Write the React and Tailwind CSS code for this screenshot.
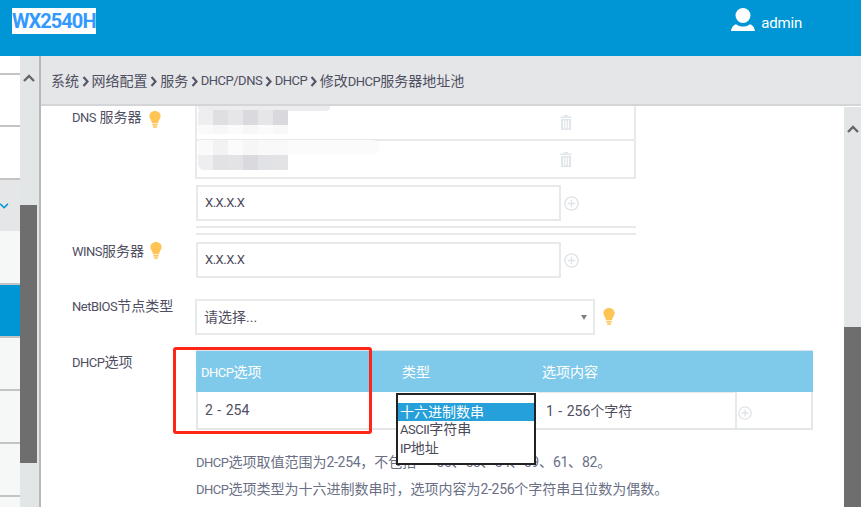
import React from "react";

const FONT = "[font-family:'Roboto','Noto_Sans_CJK_SC',sans-serif]";

function L({ children }) {
  return <span className="text-[13px] tracking-[-0.5px]">{children}</span>;
}

function N({ children }) {
  return <span className="tracking-[-0.3px]">{children}</span>;
}

function Bulb({ className }) {
  return (
    <svg viewBox="0 0 12 17" className={className} fill="#ffc454">
      <path d="M6 0C2.7 0 .4 2.4.4 5.3c0 2.6 2.2 4 2.7 6.9h5.800c.5-2.9 2.700-4.300 2.700-6.900C11.600 2.400 9.300 0 6 0z" />
      <rect x="3.400" y="13" width="5.200" height="1.600" />
      <rect x="4.200" y="15.200" width="3.600" height="1.600" />
    </svg>
  );
}

function Plus({ className }) {
  return (
    <svg viewBox="0 0 14 14" className={className} fill="none" stroke="#dfe3ea" strokeWidth="1.300">
      <circle cx="7" cy="7" r="6.200" />
      <path d="M7 3.500v7M3.500 7h7" />
    </svg>
  );
}

function Trash() {
  return (
    <svg viewBox="0 0 12 15" className="w-3 h-[15px]" fill="#e0e5ea">
      <rect x="4" y="0" width="4" height="1.500" />
      <rect x="0.500" y="1.500" width="11" height="1.500" />
      <path d="M1 4h10v11H1zM3 5.500v8h1.200v-8zM5.400 5.500v8h1.200v-8zM7.800 5.500v8H9v-8z" fillRule="evenodd" />
    </svg>
  );
}

function Up({ className }) {
  return (
    <svg viewBox="0 0 12 8" className={className} fill="none" stroke="#666" strokeWidth="2.400">
      <path d="M1 7l5-5 5 5" />
    </svg>
  );
}

function Sep() {
  return (
    <svg viewBox="0 0 7 11" className="w-[7px] h-[11px] mx-[2.800px] shrink-0" fill="none" stroke="#55566a" strokeWidth="2.200">
      <path d="M1.500 1l4 4.500-4 4.500" />
    </svg>
  );
}

function Input({ text, className = "" }) {
  return (
    <div className={"h-9 flex items-center border-2 border-[#e8e9e9] pl-[7px] text-sm text-[#4a4a5a] " + className}>
      <L>{text}</L>
    </div>
  );
}

function Mosaic({ cells, className }) {
  return (
    <div className={"absolute grid grid-cols-6 w-[90px] " + className}>
      {cells.map((c, i) => (
        <div key={i} className={c} />
      ))}
    </div>
  );
}

const TOP = [
  "h-[15px] bg-[#eeeef0] rounded-tl-sm", "h-[15px] bg-[#dfdfe2]", "h-[15px] bg-[#e6e6e8]", "h-[15px] bg-[#dadade]", "h-[15px] bg-[#e6e6e8]", "h-[15px] bg-[#d9d9dd]",
  "h-[9px] bg-[#fafafa]", "h-[9px] bg-[#f7f7f7]", "h-[9px] bg-[#fbfbfb]", "h-[9px] bg-[#f7f7f7]", "h-[9px] bg-[#fbfbfb]", "h-[9px] bg-[#f8f8f8]",
];
const BOTTOM = [
  "h-[15px] bg-[#fafafa]", "h-[15px] bg-[#f2f2f2]", "h-[15px] bg-[#fbfbfb]", "h-[15px] bg-[#f6f6f6]", "h-[15px] bg-[#f9f9f9]", "h-[15px] bg-[#f9f9f9]",
  "h-[15px] bg-[#eeeef0] rounded-bl-md", "h-[15px] bg-[#e2e2e5]", "h-[15px] bg-[#e3e3e6]", "h-[15px] bg-[#d9d9de]", "h-[15px] bg-[#e1e2e6]", "h-[15px] bg-[#e3e3e6]",
];

export default function App() {
  return (
    <div className={"w-[862px] h-[507px] overflow-hidden bg-white flex flex-col " + FONT}>
      <header className="h-14 shrink-0 mr-px bg-[#0096d6] flex justify-between">
        <div className="ml-3 mt-2 h-[26px] bg-white text-[#3399ff] text-[20px] tracking-[-0.95px] leading-[26px] font-bold">
          WX2540H
        </div>
        <div className="flex items-start h-[30px] mt-2 mr-[59px] text-white text-[15px]">
          <svg viewBox="0 0 24 23" className="w-6 h-[23px] mr-[6px]" fill="#fff">
            <circle cx="12" cy="7.500" r="7.500" />
            <path d="M0 23c.5-3 1.500-5.500 5-6.800 2 1.600 4.300 2.300 7 2.300s5-.7 7-2.300c3.500 1.300 4.500 3.800 5 6.800z" />
          </svg>
          <span className="mt-[4px] tracking-[-0.2px]">admin</span>
        </div>
      </header>

      <div className="flex flex-1 min-h-0">
        <aside className="w-[41px] shrink-0 flex">
          <div className="w-5 flex flex-col">
            <div className="h-[19px] bg-white border-b-2 border-[#c4c4c4]" />
            <div className="h-[52px] bg-white border-b-2 border-[#c4c4c4]" />
            <div className="h-[53px] bg-white border-b-2 border-[#c4c4c4]" />
            <div className="h-[51px] bg-[#e5e6e8] flex items-center">
              <svg viewBox="0 0 10 7" className="w-[9px] h-[6px]" fill="none" stroke="#0096d6" strokeWidth="1.800">
                <path d="M0 1l4.500 4.500L9 1" />
              </svg>
            </div>
            <div className="h-[54px] bg-[#f6f8f8] border-b-2 border-[#c4c4c4]" />
            <div className="h-[51px] bg-[#0096d6]" />
            <div className="h-[53px] border-t-2 border-[#c4c4c4] bg-[#f6f8f8]" />
            <div className="h-[53px] border-t-2 border-[#c4c4c4] bg-[#f6f8f8]" />
            <div className="h-[53px] border-t-2 border-[#c4c4c4] bg-[#f6f8f8]" />
            <div className="flex-1 border-t-2 border-[#c4c4c4] bg-[#f6f8f8]" />
          </div>
          <div className="w-[19px] bg-[#e3e6e7] flex flex-col">
            <div className="w-[17px] h-[149px] flex justify-center pt-[18px]">
              <Up className="w-3 h-2" />
            </div>
            <div className="w-[17px] h-[258px] bg-[#6e6e6e]" />
          </div>
          <div className="w-[2px] bg-[#b8b8b8]" />
        </aside>

        <main className="flex-1 min-w-0 flex flex-col">
          <nav className="h-[50px] shrink-0 mr-px bg-[#e5e6e8] border-b-2 border-[#d4d5d7] flex items-center pl-[10px] pt-[2px] text-sm text-[#4f4f62]">
            <span>系统</span><Sep />
            <span>网络配置</span><Sep />
            <span>服务</span><Sep />
            <L>DHCP/DNS</L><Sep />
            <L>DHCP</L><Sep />
            <span>修改<L>DHCP</L>服务器地址池</span>
          </nav>

          <div className="flex flex-1 min-h-0">
            <div className="relative flex-1 min-w-0 overflow-hidden pl-[31px] text-sm text-[#4f4f62]">
              {/* DNS */}
              <div className="flex">
                <div className="w-[123px] h-[73px] flex items-start gap-2 pt-px">
                  <span className="w-[69px] whitespace-nowrap"><L>DNS</L> 服务器</span>
                  <Bulb className="w-3 h-[17px] mt-[4px]" />
                </div>
                <div className="w-[441px] border-x-2 border-b-2 border-[#e8e9e9] h-[73px] flex flex-col">
                  <div className="h-[35px] border-b-2 border-[#e8e9e9] flex items-center pl-[363px]">
                    <Trash />
                  </div>
                  <div className="flex-1 flex items-center pl-[363px]">
                    <Trash />
                  </div>
                </div>
              </div>

              {/* DNS add */}
              <div className="flex items-center ml-[124px] mt-[6px]">
                <Input text="X.X.X.X" className="w-[365px]" />
                <Plus className="w-[15px] h-[15px] ml-[3px]" />
              </div>
              <div className="ml-[124px] w-[440px] mt-[5px] h-[9px] border-y-2 border-[#e8e9e9]" />

              {/* WINS */}
              <div className="flex mt-[7px]">
                <div className="w-[124px] -mt-px flex items-start gap-[5px]">
                  <span className="w-[73px] whitespace-nowrap"><L>WINS</L>服务器</span>
                  <Bulb className="w-3 h-[17px] mt-px" />
                </div>
                <div className="flex items-center">
                  <Input text="X.X.X.X" className="w-[365px]" />
                  <Plus className="w-[15px] h-[15px] ml-[3px]" />
                </div>
              </div>

              {/* NetBIOS */}
              <div className="flex mt-[21px]">
                <div className="w-[123px] -mt-[3px] whitespace-nowrap"><L>NetBIOS</L>节点类型</div>
                <div className="w-[400px] h-9 border-2 border-[#e8e9e9] flex items-center justify-between pl-[7px] pr-[6px] text-sm">
                  <span>请选择...</span>
                  <span className="w-0 h-0 border-x-[3px] border-x-transparent border-t-[5px] border-t-[#808080]" />
                </div>
                <Bulb className="w-3 h-[17px] ml-2 mt-[9px]" />
              </div>

              {/* DHCP options */}
              <div className="flex mt-[15px]">
                <div className="w-[124px] pt-[2px] whitespace-nowrap"><L>DHCP</L>选项</div>
                <div className="w-[617px]">
                  <div className="h-[42px] bg-[#7fc9ea] border-t border-[#dfe4e6] flex items-center text-white pt-px">
                    <span className="w-[206px] pl-[5px]"><L>DHCP</L>选项</span>
                    <span className="w-[140px]">类型</span>
                    <span>选项内容</span>
                  </div>
                  <div className="flex h-[38px] border-x-2 border-b-2 border-[#e3e7e8]">
                    <div className="w-[175px] h-[36px] flex items-center pl-[7px] text-sm [word-spacing:1px]">2 - 254</div>
                    <div className="w-[165px]" />
                    <div className="w-[199px] h-[36px] border-r-2 border-[#e8e9e9] border-t border-t-[#e8e9e9] flex items-center pl-2 text-sm">
                      <span className="[word-spacing:1px]">1 - 256个字符</span>
                    </div>
                    <div className="flex-1 flex items-center pl-px pt-[5px]">
                      <Plus className="w-[14px] h-[14px]" />
                    </div>
                  </div>
                </div>
              </div>

              {/* notes */}
              <div className="ml-[124px] mt-[19px] text-sm text-[#6a6f85] leading-[27px] whitespace-nowrap">
                <p>
                  <L>DHCP</L>选项取值范围为<N>2-254</N>，不包括
                  <span className="ml-[20px]"><N>50</N></span>、<N>53</N>、<N>54</N>、<N>59</N>、<N>61</N>、<N>82</N>。
                </p>
                <p><L>DHCP</L>选项类型为十六进制数串时，选项内容为<N>2-256</N>个字符串且位数为偶数。</p>
              </div>

              {/* redaction smears */}
              <div className="absolute left-[157px] top-0 w-[132px] h-[5px] bg-[#ececee] rounded-b-sm" />
              <Mosaic cells={TOP} className="left-[157px] top-[4px]" />
              <div className="absolute left-[157px] top-[34px] w-[182px] h-[15px] bg-[#fbfbfb] rounded-r-xl" />
              <Mosaic cells={BOTTOM} className="left-[157px] top-[34px]" />

              {/* opened select list */}
              <div className="absolute left-[355px] top-[287px] w-[140px] h-[72px] bg-white border-2 border-[#222] pt-2 text-sm text-[#4a4a5a] leading-[18px]">
                <div className="h-[18px] bg-[#26a0da] text-white pl-[2px]">十六进制数串</div>
                <div className="h-[18px] leading-[17px] pl-[2px]"><L>ASCII</L>字符串</div>
                <div className="h-[18px] pl-[2px]"><L>IP</L>地址</div>
              </div>

              {/* red annotation */}
              <div className="absolute left-[132px] top-[241px] w-[199px] h-[87px] border-[3px] border-[#ff2618] rounded-[3px]" />
            </div>

            <div className="w-[17px] mr-px ml-[2px] mt-px bg-[#e3e6e7] flex flex-col">
              <div className="h-[220px] flex justify-center pt-[18px]">
                <Up className="w-3 h-2" />
              </div>
              <div className="flex-1 bg-[#6e6e6e]" />
            </div>
          </div>
        </main>
      </div>
    </div>
  );
}
